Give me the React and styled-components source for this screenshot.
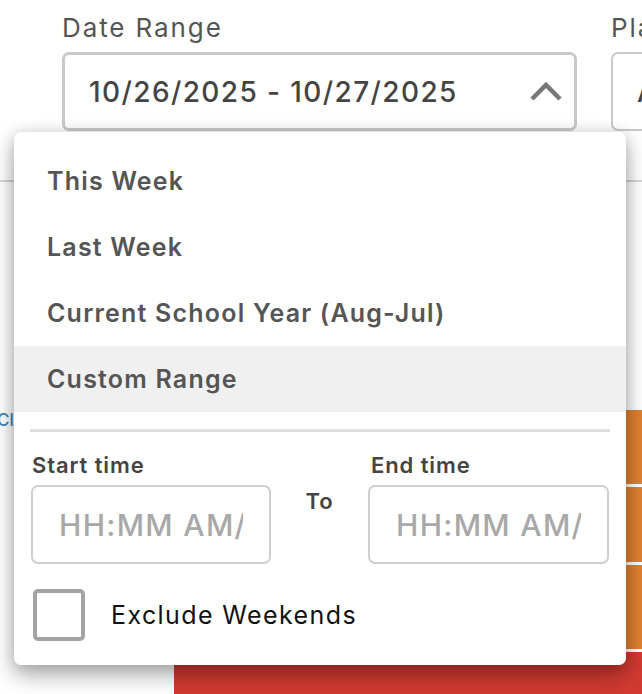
import React from "react";
import styled, { createGlobalStyle } from "styled-components";

const FONT = `"Inter", "Liberation Sans", sans-serif`;

const Global = createGlobalStyle`
  html, body { margin: 0; padding: 0; background: #fff; }
  body { font-family: ${FONT}; overflow: hidden; }
  * { box-sizing: border-box; }
`;

const Page = styled.div`
  position: relative;
  width: 642px;
  height: 694px;
  overflow: hidden;
  background: #fff;
`;

const FilterBar = styled.div`
  height: 182px;
  display: flex;
  gap: 34px;
  padding: 12px 0 0 62px;
  border-bottom: 2px solid #d6d6d6;
`;

const Field = styled.div`
  display: flex;
  flex-direction: column;
  flex: 0 0 ${(p) => p.$width}px;
`;

const FieldLabel = styled.div`
  font-size: 26px;
  line-height: 32px;
  color: #555;
  letter-spacing: 1.9px;
  margin-bottom: 8px;
  white-space: nowrap;
`;

const SelectBox = styled.div`
  height: 79px;
  border: ${(p) => (p.$open ? 3 : 2)}px solid #c9c9c9;
  border-radius: 7px;
  display: flex;
  align-items: center;
  justify-content: space-between;
  padding: 0 11px 0 24px;
  font-size: 28px;
  font-weight: 500;
  color: #444;
  letter-spacing: 1.4px;
  white-space: nowrap;
  overflow: hidden;
  background: #fff;
`;

const Content = styled.div`
  display: flex;
  padding-top: 228px;
`;

const LeftCol = styled.div`
  width: 174px;
  flex: 0 0 174px;
`;

const ClearLink = styled.a`
  display: block;
  margin-left: -3px;
  font-size: 17px;
  font-weight: 500;
  line-height: 20px;
  color: #3a86c2;
  text-decoration: none;
`;

const Chart = styled.div`
  flex: 1;
  display: flex;
  flex-direction: column;
  gap: 3px;
`;

const Bar = styled.div`
  height: ${(p) => p.$h}px;
  background: ${(p) => p.$color};
`;

const Dropdown = styled.div`
  position: absolute;
  top: 132px;
  left: 14px;
  width: 612px;
  height: 533px;
  background: #fff;
  border-radius: 7px;
  box-shadow: 0 10px 22px rgba(0, 0, 0, 0.34), 0 0 14px rgba(0, 0, 0, 0.12);
  display: flex;
  flex-direction: column;
  padding-top: 16px;
`;

const Option = styled.div`
  height: 66px;
  display: flex;
  align-items: center;
  padding-left: 33px;
  font-size: 25px;
  font-weight: 600;
  color: #555;
  letter-spacing: 1.2px;
  background: ${(p) => (p.$active ? "#f0f0f0" : "transparent")};
`;

const Divider = styled.div`
  height: 3px;
  margin: 17px 16px 0;
  background: #dedede;
`;

const TimeRow = styled.div`
  display: grid;
  grid-template-columns: 240px 1fr 241px;
  padding: 20px 17px 0 17px;
`;

const TimeField = styled.div`
  display: flex;
  flex-direction: column;
`;

const TimeLabel = styled.div`
  font-size: 22px;
  font-weight: 600;
  line-height: 26px;
  color: #444;
  letter-spacing: 0.9px;
  margin-bottom: 7px;
  padding-left: ${(p) => p.$indent}px;
`;

const TimeInput = styled.input`
  height: 79px;
  width: 100%;
  border: 2px solid #cfcfcf;
  border-radius: 7px;
  padding: 0 26px 0 26px;
  font-family: ${FONT};
  font-size: 30px;
  font-weight: 500;
  letter-spacing: 1.3px;
  color: #333;
  outline: none;
  &::placeholder { color: #a8a8a8; }
`;

const ToLabel = styled.div`
  display: flex;
  justify-content: center;
  padding-top: 36px;
  font-size: 22px;
  font-weight: 600;
  letter-spacing: 0.8px;
  color: #444;
`;

const CheckRow = styled.label`
  display: flex;
  align-items: center;
  gap: 26px;
  padding: 25px 0 0 19px;
`;

const CheckBox = styled.span`
  width: 52px;
  height: 52px;
  border: 4px solid #a3a3a3;
  border-radius: 5px;
  flex: 0 0 52px;
`;

const CheckText = styled.span`
  font-size: 25px;
  color: #111;
  letter-spacing: 1.4px;
`;

const Chevron = () => (
  <svg width="34" height="24" viewBox="0 0 34 24">
    <polyline points="3,19 17,5 31,19" fill="none" stroke="#777" strokeWidth="4.5" strokeLinejoin="miter" />
  </svg>
);

export default function App() {
  return (
    <Page>
      <Global />
      <FilterBar>
        <Field $width={515}>
          <FieldLabel>Date Range</FieldLabel>
          <SelectBox $open>
            <span>10/26/2025 - 10/27/2025</span>
            <Chevron />
          </SelectBox>
        </Field>
        <Field $width={220}>
          <FieldLabel>Platform</FieldLabel>
          <SelectBox>
            <span>All</span>
          </SelectBox>
        </Field>
      </FilterBar>
      <Content>
        <LeftCol>
          <ClearLink href="#">Clear</ClearLink>
        </LeftCol>
        <Chart>
          <Bar $h={74} $color="#e08030" />
          <Bar $h={75} $color="#e08030" />
          <Bar $h={84} $color="#e08030" />
          <Bar $h={60} $color="#d23a31" />
        </Chart>
      </Content>
      <Dropdown>
        <Option>This Week</Option>
        <Option>Last Week</Option>
        <Option>Current School Year (Aug-Jul)</Option>
        <Option $active>Custom Range</Option>
        <Divider />
        <TimeRow>
          <TimeField>
            <TimeLabel $indent={1}>Start time</TimeLabel>
            <TimeInput placeholder="HH:MM AM/PM" />
          </TimeField>
          <ToLabel>To</ToLabel>
          <TimeField>
            <TimeLabel $indent={3}>End time</TimeLabel>
            <TimeInput placeholder="HH:MM AM/PM" />
          </TimeField>
        </TimeRow>
        <CheckRow>
          <CheckBox />
          <CheckText>Exclude Weekends</CheckText>
        </CheckRow>
      </Dropdown>
    </Page>
  );
}
